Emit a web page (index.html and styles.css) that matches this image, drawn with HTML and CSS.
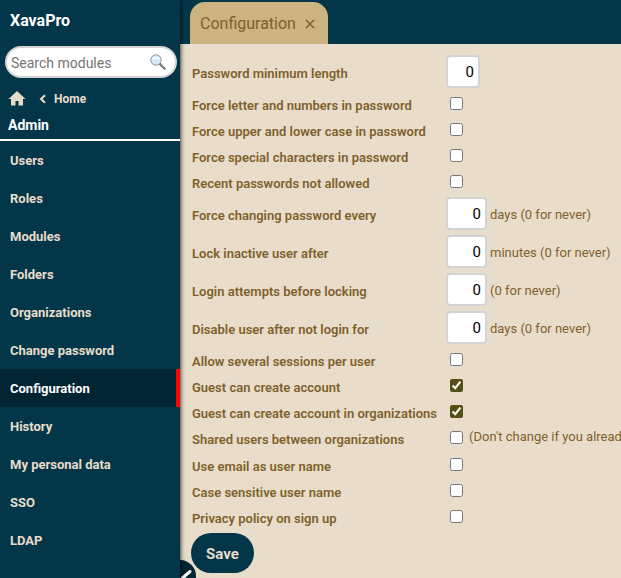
FILE: index.html
```html
<!DOCTYPE html>
<html lang="en">
<head>
<meta charset="utf-8">
<title>XavaPro - Configuration</title>
<link rel="stylesheet" href="styles.css">
</head>
<body>
<div class="app">
  <aside class="sidebar">
    <h1 class="brand">XavaPro</h1>
    <div class="search">
      <input class="search-input" type="text" placeholder="Search modules" aria-label="Search modules">
      <svg class="search-icon" viewBox="0 0 16 16" aria-hidden="true">
        <path d="M9.5 9.5l5 5" stroke="#666" stroke-width="2.4" stroke-linecap="round"/>
        <path d="M10.8 10.2l3.6 3.6" stroke="#bbb" stroke-width="1"/>
        <circle cx="6" cy="6" r="5.2" fill="#d4e8fa" stroke="#8d9bab" stroke-width="1"/>
        <path d="M2.8 5.4q3-3 6.4 0" fill="none" stroke="#f4faff" stroke-width="2"/>
      </svg>
    </div>
    <nav class="crumbs" aria-label="Breadcrumb">
      <a href="#" aria-label="Start"><svg class="home-icon" viewBox="0 0 18 16" aria-hidden="true"><path d="M9 0L.5 8H3v6.500h4.500V10h3v4.500H15V8h2.500z"/></svg></a>
      <a class="crumb-back" href="#"><svg class="back-icon" viewBox="0 0 8 10" aria-hidden="true"><path d="M6 1.200L2 5l4 3.800"/></svg>Home</a>
    </nav>
    <h2 class="section">Admin</h2>
    <nav class="menu" aria-label="Modules">
      <a href="#">Users</a>
      <a href="#">Roles</a>
      <a href="#">Modules</a>
      <a href="#">Folders</a>
      <a href="#">Organizations</a>
      <a href="#">Change password</a>
      <a class="active" href="#" aria-current="page">Configuration</a>
      <a href="#">History</a>
      <a href="#">My personal data</a>
      <a href="#">SSO</a>
      <a href="#">LDAP</a>
    </nav>
  </aside>
  <main class="main">
    <header class="tabs">
      <div class="tab"><span>Configuration</span><button class="tab-close" type="button" aria-label="Close"><svg class="close-icon" viewBox="0 0 10 10" aria-hidden="true"><path d="M1 1l8 8M9 1L1 9"/></svg></button></div>
    </header>
    <form class="form">
      <div class="row tall"><label for="f1">Password minimum length</label><input class="num narrow" id="f1" type="text" value="0"></div>
      <div class="row"><label for="f2">Force letter and numbers in password</label><input class="check" id="f2" type="checkbox"></div>
      <div class="row"><label for="f3">Force upper and lower case in password</label><input class="check" id="f3" type="checkbox"></div>
      <div class="row"><label for="f4">Force special characters in password</label><input class="check" id="f4" type="checkbox"></div>
      <div class="row"><label for="f5">Recent passwords not allowed</label><input class="check" id="f5" type="checkbox"></div>
      <div class="row tall"><label for="f6">Force changing password every</label><input class="num" id="f6" type="text" value="0"><span class="hint">days (0 for never)</span></div>
      <div class="row tall"><label for="f7">Lock inactive user after</label><input class="num" id="f7" type="text" value="0"><span class="hint">minutes (0 for never)</span></div>
      <div class="row tall"><label for="f8">Login attempts before locking</label><input class="num" id="f8" type="text" value="0"><span class="hint">(0 for never)</span></div>
      <div class="row tall"><label for="f9">Disable user after not login for</label><input class="num" id="f9" type="text" value="0"><span class="hint">days (0 for never)</span></div>
      <div class="row"><label for="f10">Allow several sessions per user</label><input class="check" id="f10" type="checkbox"></div>
      <div class="row"><label for="f11">Guest can create account</label><input class="check" id="f11" type="checkbox" checked></div>
      <div class="row"><label for="f12">Guest can create account in organizations</label><input class="check" id="f12" type="checkbox" checked></div>
      <div class="row noted"><label for="f13">Shared users between organizations</label><input class="check" id="f13" type="checkbox"><span class="hint">(Don't change if you already</span></div>
      <div class="row"><label for="f14">Use email as user name</label><input class="check" id="f14" type="checkbox"></div>
      <div class="row"><label for="f15">Case sensitive user name</label><input class="check" id="f15" type="checkbox"></div>
      <div class="row"><label for="f16">Privacy policy on sign up</label><input class="check" id="f16" type="checkbox"></div>
      <button class="save" type="button">Save</button>
    </form>
    <button class="collapse" type="button" aria-label="Hide modules"><svg class="collapse-icon" viewBox="0 0 12 20" aria-hidden="true"><path d="M10 5.500L3 11.500l7 6"/></svg></button>
  </main>
</div>
</body>
</html>
```
FILE: styles.css
```css
* { box-sizing: border-box; }
body {
  margin: 0;
  background: #e8ddcb;
  color: #7f612a;
  font: 13px/16px Roboto, sans-serif;
  overflow: hidden;
}
a { color: inherit; text-decoration: none; }
button { border: 0; padding: 0; font: inherit; color: inherit; background: none; }
svg { display: block; fill: none; }
.app { display: flex; height: 100vh; }
.sidebar {
  position: relative;
  z-index: 1;
  flex: 0 0 180px;
  background: #033649;
  color: #e8ddcb;
  box-shadow: 0 0 5px #000;
  font-weight: 700;
}
.brand { margin: 0; padding: 11px 10px 15px; font-size: 16px; line-height: 20px; font-weight: 700; color: #fff; }
.search { position: relative; margin: 0 3px 0 5px; }
.search-input {
  display: block;
  width: 100%;
  height: 32px;
  padding: 2px 32px 0 4px;
  border: 2px solid #d3d3d3;
  border-radius: 16px;
  font: 14px Roboto, sans-serif;
  color: #000;
  background: #fff;
}
.search-input::placeholder { color: #757575; }
.search-icon { position: absolute; right: 11px; top: 8px; width: 16px; height: 16px; }
.crumbs { display: flex; align-items: center; gap: 13px; padding: 10px 8px 0; height: 31px; font-size: 12px; }
.home-icon { width: 18px; height: 16px; fill: #e8ddcb; }
.crumb-back { display: flex; align-items: center; gap: 7px; }
.back-icon { width: 8px; height: 10px; stroke: #e8ddcb; stroke-width: 2; }
.section { margin: 0; padding: 6px 8px; height: 32px; border-bottom: 2px solid #fff; font-size: 14px; line-height: 20px; font-weight: 700; color: #fff; }
.menu { display: flex; flex-direction: column; }
.menu a { height: 38px; padding: 2px 10px 0; line-height: 36px; border-right: 4px solid transparent; }
.menu .active { color: #fff; background: #022533; border-color: #f00; }
.main { position: relative; flex: 1; min-width: 0; }
.collapse {
  position: absolute;
  left: -16px;
  bottom: -14px;
  width: 32px;
  height: 32px;
  border-radius: 16px;
  background: #022533;
}
.collapse-icon { width: 12px; height: 20px; margin-left: 16px; stroke: #fff; stroke-width: 3; stroke-linecap: round; }
.tabs { height: 44px; padding: 2px 10px 0; background: #033649; }
.tab {
  display: inline-flex;
  align-items: center;
  gap: 9px;
  height: 42px;
  padding: 2px 13px 0 10px;
  border-radius: 15px 15px 0 0;
  background: #cdb380;
  font-size: 16px;
}
.close-icon { width: 10px; height: 10px; stroke: #7f612a; stroke-width: 1.500; }
.form { padding: 8px 0 0 11px; }
.row { display: flex; align-items: center; height: 26px; white-space: nowrap; }
.row label { flex: 0 0 255px; padding: 5px 0 0 1px; font-weight: 600; }
.tall { height: 38px; }
.noted { height: 27px; }
.num {
  width: 41px;
  height: 33px;
  padding: 2px 4px 0;
  border: 2px solid #d3d3d3;
  border-radius: 4px;
  font: 15px Roboto, sans-serif;
  text-align: right;
  color: #000;
  background: #fff;
}
.narrow { width: 34px; }
.check { flex: none; width: 13px; height: 13px; margin: 0 6px 0 4px; accent-color: #564f14; }
.hint { margin-left: 3px; padding-top: 3px; }
.noted .hint { margin-left: 0; padding: 0 0 2px; }
.save {
  display: block;
  height: 40px;
  margin-top: 4px;
  padding: 2px 15px 0;
  border-radius: 20px;
  background: #033649;
  color: #e8ddcb;
  font-size: 15px;
  font-weight: 700;
}
```
